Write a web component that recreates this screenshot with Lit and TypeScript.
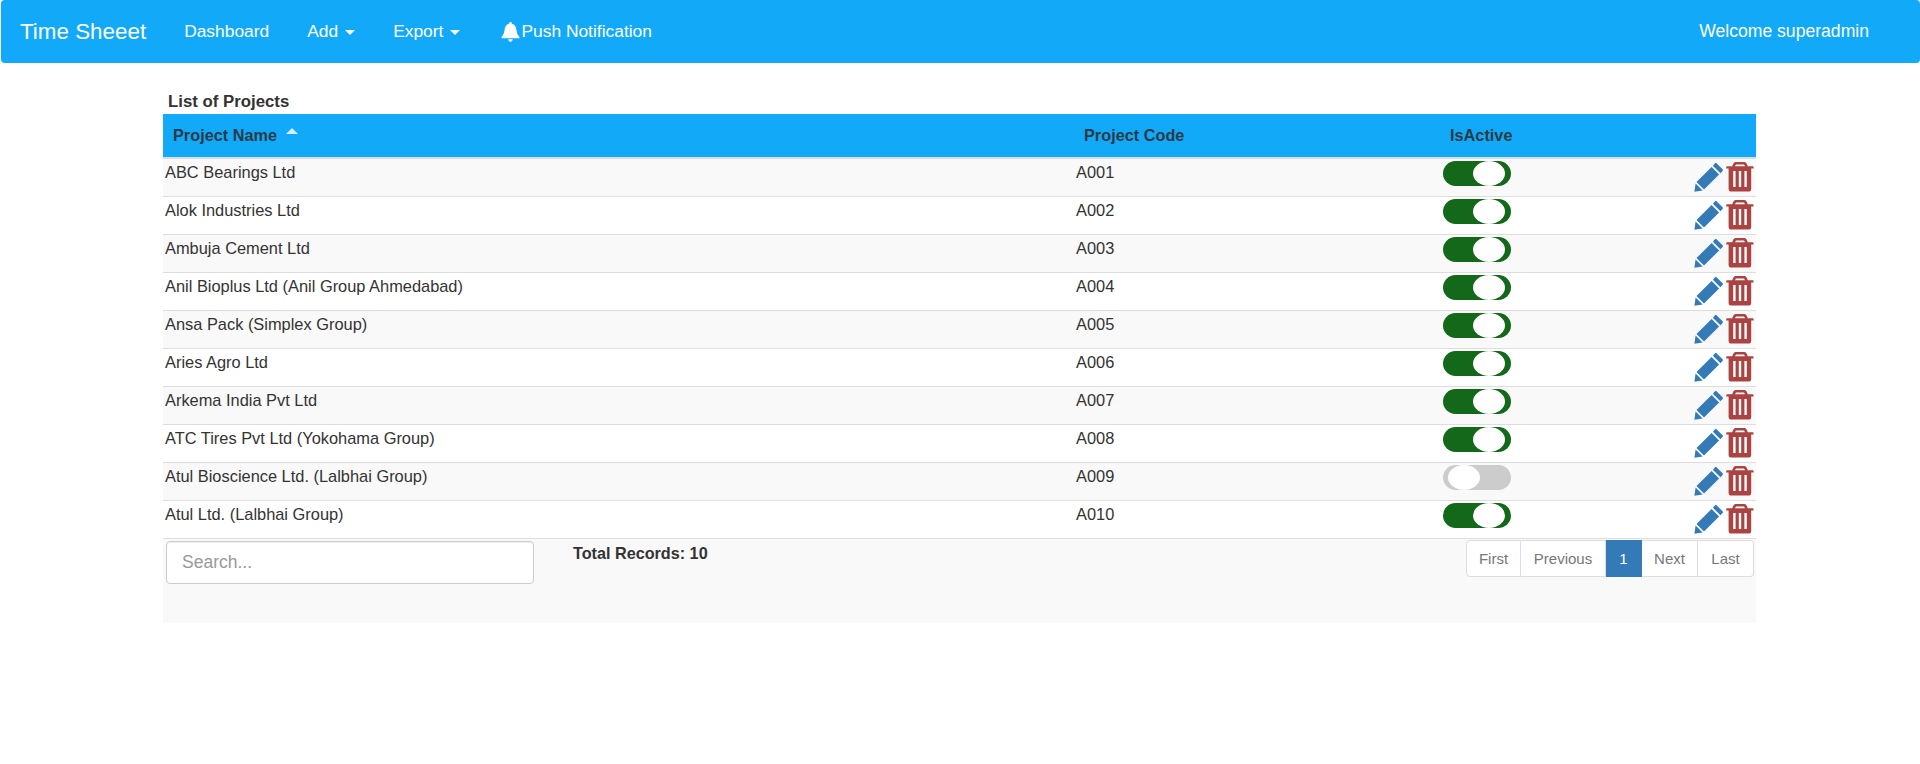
import { LitElement, html, css, svg } from 'lit';
import { customElement } from 'lit/decorators.js';

const projects = [
	{ name: 'ABC Bearings Ltd', code: 'A001', active: true },
	{ name: 'Alok Industries Ltd', code: 'A002', active: true },
	{ name: 'Ambuja Cement Ltd', code: 'A003', active: true },
	{ name: 'Anil Bioplus Ltd (Anil Group Ahmedabad)', code: 'A004', active: true },
	{ name: 'Ansa Pack (Simplex Group)', code: 'A005', active: true },
	{ name: 'Aries Agro Ltd', code: 'A006', active: true },
	{ name: 'Arkema India Pvt Ltd', code: 'A007', active: true },
	{ name: 'ATC Tires Pvt Ltd (Yokohama Group)', code: 'A008', active: true },
	{ name: 'Atul Bioscience Ltd. (Lalbhai Group)', code: 'A009', active: false },
	{ name: 'Atul Ltd. (Lalbhai Group)', code: 'A010', active: true },
];

const pencil = svg`<path d="M22.5 1.2 L28.6 7.3 Q29.4 8.2 28.6 9 L26.4 11.2 L18.9 3.7 L21 1.3 Q21.8 .5 22.5 1.2 Z M17.6 5 L25.1 12.5 L10 27.6 L2.5 20.1 Z M1.6 21.6 L8.6 28.6 L0.4 29.8 Z" />`;
const trash = svg`<path fill-rule="evenodd" d="M9.5 0 H18.5 Q20 0 20.6 1.5 L21.8 4.2 H26.6 Q27.6 4.2 27.6 5.2 V6.6 H25.2 V26.4 Q25.2 29.6 22.4 29.6 H5.4 Q2.6 29.6 2.6 26.4 V6.6 H.2 V5.2 Q.2 4.2 1.2 4.2 H6.2 L7.4 1.5 Q8 0 9.5 0 Z M10 2.4 L9 4.2 H19 L18 2.4 Z M7.2 9 V25 H9.6 V9 Z M12.8 9 V25 H15.2 V9 Z M18.4 9 V25 H20.8 V9 Z" />`;
const bell = svg`<path d="M8.5 0 Q10 0 10 1.6 Q13.6 2.6 14 7 Q14.3 11.5 17 14.2 V15.4 H0 V14.2 Q2.7 11.5 3 7 Q3.4 2.6 7 1.6 Q7 0 8.5 0 Z M6.3 16.4 H10.7 Q10.2 19 8.5 19 Q6.8 19 6.3 16.4 Z" />`;

@customElement('app-root')
export class AppRoot extends LitElement {
	static styles = css`
		:host {
			display: block;
			min-height: 764px;
			background: #fff;
			font-family: 'Liberation Sans', Arial, sans-serif;
			color: #333;
		}

		.navbar {
			display: flex;
			align-items: center;
			height: 63px;
			margin-left: 1px;
			background: #12a9f8;
			border-radius: 4px;
			color: #fff;
			font-size: 17.4px;
		}

		.brand {
			margin-left: 19px;
			margin-right: 38px;
			font-size: 22.4px;
		}

		.nav-link {
			display: flex;
			align-items: center;
			margin-right: 38px;
		}

		.nav-link.last {
			margin-left: 3px;
		}

		.caret {
			width: 0;
			height: 0;
			margin-left: 7px;
			margin-top: 2px;
			border-top: 5px solid #fff;
			border-left: 5px solid transparent;
			border-right: 5px solid transparent;
		}

		.bell {
			width: 19px;
			height: 20px;
			fill: #fff;
			margin-right: 1px;
		}

		.welcome {
			margin-left: auto;
			margin-right: 51px;
			font-size: 17.6px;
		}

		.content {
			width: 1593px;
			margin: 0 0 0 163px;
		}

		.title {
			height: 51px;
			box-sizing: border-box;
			padding: 28px 0 0 5px;
			font-size: 16.8px;
			font-weight: bold;
			line-height: 22px;
			color: #333;
		}

		table {
			width: 100%;
			border-collapse: collapse;
			table-layout: fixed;
			font-size: 16.4px;
		}

		th {
			height: 43px;
			padding: 0 0 0 10px;
			background: #12a9f8;
			text-align: left;
			font-size: 16.3px;
			font-weight: bold;
			color: #2a3b47;
		}

		.sort {
			display: inline-block;
			width: 0;
			height: 0;
			margin-left: 9px;
			vertical-align: 7px;
			border-bottom: 6px solid #d6eefc;
			border-left: 6px solid transparent;
			border-right: 6px solid transparent;
		}

		td {
			height: 38px;
			padding: 0 0 9px 2px;
			box-sizing: border-box;
			border-bottom: 1px solid #ddd;
			color: #333;
		}

		tbody tr:first-child td {
			border-top: 2px solid #ddd;
		}

		tbody tr:nth-child(odd) td {
			background: #f9f9f9;
		}

		.toggle-cell {
			padding: 2px 0 0 3px;
			vertical-align: top;
		}

		.toggle {
			position: relative;
			width: 68px;
			height: 25px;
			border-radius: 13px;
			background: #14681a;
		}

		.toggle.off {
			background: #ccc;
		}

		.knob {
			position: absolute;
			top: 0;
			right: 6px;
			width: 32px;
			height: 25px;
			border-radius: 50%;
			background: #fff;
		}

		.toggle.off .knob {
			right: auto;
			left: 5px;
		}

		.actions-cell {
			padding: 3px 2px 0 0;
			vertical-align: top;
		}

		.actions {
			display: flex;
			justify-content: flex-end;
			gap: 2px;
		}

		.pencil {
			width: 30px;
			height: 30px;
			fill: #337ab7;
		}

		.trash {
			width: 28px;
			height: 30px;
			fill: #a94442;
		}

		.footer {
			display: flex;
			align-items: flex-start;
			height: 84px;
			background: #f9f9f9;
		}

		.search {
			width: 368px;
			height: 43px;
			box-sizing: border-box;
			margin: 2px 0 0 3px;
			padding: 0 15px;
			border: 1px solid #ccc;
			border-radius: 4px;
			background: #fff;
			color: #999;
			font-size: 17.5px;
			line-height: 41px;
			box-shadow: inset 0 1px 1px rgba(0, 0, 0, 0.075);
		}

		.total {
			margin: 4px 0 0 39px;
			font-size: 16.2px;
			font-weight: bold;
			line-height: 20px;
		}

		.pagination {
			display: flex;
			height: 37px;
			margin: 1px 2px 0 auto;
			font-size: 15px;
			color: #777;
		}

		.pagination span {
			display: flex;
			align-items: center;
			justify-content: center;
			box-sizing: border-box;
			border: 1px solid #ddd;
			border-left-width: 0;
			background: #fff;
		}

		.pagination span:first-child {
			border-left-width: 1px;
			border-radius: 4px 0 0 4px;
		}

		.pagination span:last-child {
			border-radius: 0 4px 4px 0;
		}

		.pagination .current {
			background: #337ab7;
			border-color: #337ab7;
			color: #fff;
		}
	`;

	render() {
		const pages = [
			['First', 55],
			['Previous', 85],
			['1', 36],
			['Next', 56],
			['Last', 56],
		];
		return html`
			<nav class="navbar">
				<span class="brand">Time Sheeet</span>
				<span class="nav-link">Dashboard</span>
				<span class="nav-link">Add<i class="caret"></i></span>
				<span class="nav-link">Export<i class="caret"></i></span>
				<span class="nav-link last">
					<svg class="bell" viewBox="0 0 17 19">${bell}</svg>Push Notification
				</span>
				<span class="welcome">Welcome superadmin</span>
			</nav>
			<main class="content">
				<div class="title">List of Projects</div>
				<table>
					<colgroup>
						<col style="width: 911px" />
						<col style="width: 366px" />
						<col style="width: 150px" />
						<col />
					</colgroup>
					<thead>
						<tr>
							<th>Project Name<i class="sort"></i></th>
							<th>Project Code</th>
							<th>IsActive</th>
							<th></th>
						</tr>
					</thead>
					<tbody>
						${projects.map(
							(p) => html`
								<tr>
									<td>${p.name}</td>
									<td>${p.code}</td>
									<td class="toggle-cell">
										<div class="toggle ${p.active ? '' : 'off'}"><div class="knob"></div></div>
									</td>
									<td class="actions-cell">
										<div class="actions">
											<svg class="pencil" viewBox="0 0 30 30">${pencil}</svg>
											<svg class="trash" viewBox="0 0 28 30">${trash}</svg>
										</div>
									</td>
								</tr>
							`
						)}
					</tbody>
				</table>
				<div class="footer">
					<div class="search">Search...</div>
					<div class="total">Total Records: 10</div>
					<div class="pagination">
						${pages.map(
							([label, width]) => html`<span class=${label === '1' ? 'current' : ''} style="width: ${width}px">${label}</span>`
						)}
					</div>
				</div>
			</main>
		`;
	}
}
